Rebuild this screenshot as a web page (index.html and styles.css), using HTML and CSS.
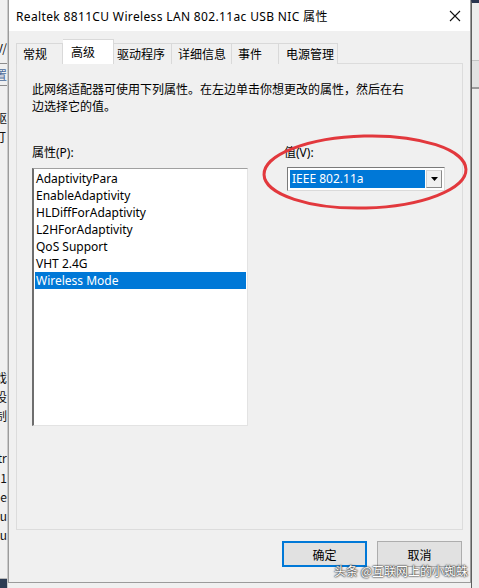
FILE: index.html
```html
<!DOCTYPE html>
<html lang="zh-CN">
<head>
  <meta charset="UTF-8" />
  <title>Realtek 8811CU Wireless LAN 802.11ac USB NIC 属性</title>
  <link rel="stylesheet" href="styles.css">
</head>
<body>
  <div class="screen">
    <div class="side side-left">
      <div class="frag frag-v">V/</div>
      <div class="frag frag-tab">置</div>
      <div class="frag frag-a">驱</div>
      <div class="frag frag-b">打</div>
      <div class="frag frag-c">戏</div>
      <div class="frag">设</div>
      <div class="frag">制</div>
      <div class="frag frag-d">tr</div>
      <div class="frag">1</div>
      <div class="frag">e</div>
      <div class="frag">tu</div>
      <div class="frag">tu</div>
      <div class="side-bottom"></div>
    </div>

    <div class="dialog">
      <div class="titlebar">
        <span class="title">Realtek 8811CU Wireless LAN 802.11ac USB NIC 属性</span>
        <svg class="close" width="12" height="12" viewBox="0 0 12 12">
          <path d="M1 1L11 11M11 1L1 11" stroke="#111" stroke-width="1.1" fill="none"/>
        </svg>
      </div>

      <div class="dialog-body">
        <div class="tabs">
          <div class="tab tab-general">常规</div>
          <div class="tab active">高级</div>
          <div class="tab tab-driver">驱动程序</div>
          <div class="tab tab-details">详细信息</div>
          <div class="tab tab-events">事件</div>
          <div class="tab tab-power">电源管理</div>
        </div>

        <div class="panel">
          <p class="desc">此网络适配器可使用下列属性。在左边单击你想更改的属性，然后在右<br>边选择它的值。</p>
          <div class="props">
            <div class="col-left">
              <div class="field-label">属性(P):</div>
              <ul class="listbox">
                <li>AdaptivityPara</li>
                <li>EnableAdaptivity</li>
                <li>HLDiffForAdaptivity</li>
                <li>L2HForAdaptivity</li>
                <li>QoS Support</li>
                <li>VHT 2.4G</li>
                <li class="selected">Wireless Mode</li>
              </ul>
            </div>
            <div class="col-right">
              <div class="field-label">值(V):</div>
              <div class="combo">
                <span class="combo-value">IEEE 802.11a</span>
                <span class="combo-btn">
                  <svg width="7" height="4" viewBox="0 0 7 4"><path d="M0 0H7L3.5 4z" fill="#000"/></svg>
                </span>
              </div>
            </div>
          </div>
        </div>

        <div class="buttons">
          <button class="btn btn-default" type="button">确定</button>
          <button class="btn" type="button">取消</button>
        </div>
      </div>

      <svg class="annotation" width="463" height="583" viewBox="0 0 463 583">
        <ellipse cx="357" cy="172" rx="101" ry="36" transform="rotate(-1.5 357 172)" fill="none" stroke="#e2383d" stroke-width="3"/>
      </svg>
      <div class="watermark">头条 @互联网上的小蜘蛛</div>
    </div>

    <div class="side side-right">
      <div class="right-band"></div>
    </div>
  </div>
</body>
</html>
```

FILE: styles.css
```css
* {
  margin: 0;
  padding: 0;
  box-sizing: border-box;
}

body {
  width: 479px;
  height: 588px;
  overflow: hidden;
  background-color: #f0f0f0;
  font-family: "Noto Sans", "Noto Sans CJK SC", sans-serif;
  font-size: 12px;
  color: #000;
}

.screen {
  display: flex;
  height: 588px;
}

/* window behind the dialog */
.side {
  flex: none;
  width: 8px;
  overflow: hidden;
  display: flex;
  flex-direction: column;
}

.side-left {
  background-color: #f0f0f0;
  border-right: 1px solid #c9c9c9;
}

.frag {
  display: flex;
  justify-content: flex-end;
  white-space: nowrap;
  height: 19px;
  line-height: 19px;
  font-family: "Noto Sans CJK SC", sans-serif;
  color: #111;
}

.frag-v {
  margin-top: 38px;
}

.frag-tab {
  margin-top: 6px;
  height: 23px;
  line-height: 22px;
  border-top: 1px solid #8c8c8c;
  border-bottom: 1px solid #8c8c8c;
  color: #4a6b9a;
}

.frag-a {
  margin-top: 22px;
}

.frag-b {
  padding-right: 1px;
}

.frag-c {
  margin-top: 222px;
}

.frag-d {
  margin-top: 24px;
  font-family: "Noto Sans", sans-serif;
}

.side-bottom {
  margin-top: auto;
  height: 10px;
  border-top: 1px solid #b9b9b9;
  background-color: #2c3b52;
}

.side-right {
  background-color: #ededed;
  border-left: 1px solid #5f5f5f;
  border-top: 3px solid #2a3550;
}

.right-band {
  margin-top: 57px;
  height: 29px;
  background-color: #e2e2e2;
  border-top: 1px solid #c4c4c4;
  border-bottom: 2px solid #9a9a9a;
}

/* dialog */
.dialog {
  position: relative;
  flex: none;
  width: 463px;
  height: 583px;
  background-color: #f0f0f0;
  border: 1px solid #9b9b9b;
  border-top: none;
}

.titlebar {
  display: flex;
  align-items: center;
  justify-content: space-between;
  height: 31px;
  padding: 0 9px 0 7px;
  background-color: #fff;
}

.title {
  font-size: 12px;
  letter-spacing: 0.35px;
  padding-top: 1px;
}

.dialog-body {
  padding: 8px 7px 0 7px;
}

.tabs {
  display: flex;
  align-items: flex-end;
  height: 25px;
  position: relative;
  z-index: 1;
  margin-bottom: -1px;
}

.tab {
  flex: none;
  height: 21px;
  line-height: 20px;
  padding-right: 0;
  white-space: nowrap;
  border: 1px solid #d9d9d9;
  border-bottom: none;
  border-left: none;
  background-color: #f0f0f0;
  font-family: "Noto Sans CJK SC", sans-serif;
}

.tab-general {
  width: 47px;
  padding-left: 6px;
  border-left: 1px solid #d9d9d9;
}

.tab.active {
  width: 51px;
  height: 25px;
  line-height: 23px;
  background-color: #fff;
  padding-left: 8px;
}

.tab-driver {
  width: 58px;
  padding-left: 3px;
}

.tab-details {
  width: 60px;
  padding-left: 6px;
}

.tab-events {
  width: 47px;
  padding-left: 6px;
}

.tab-power {
  width: 59px;
  padding-left: 7px;
}

.panel {
  height: 467px;
  padding: 16px 15px 0 15px;
  border: 1px solid #fbfbfb;
  outline: 1px solid #dcdcdc;
  outline-offset: -1px;
  border-top-color: #d9d9d9;
  background-color: #f0f0f0;
}

.desc {
  line-height: 17px;
  font-family: "Noto Sans CJK SC", sans-serif;
}

.props {
  display: flex;
  margin-top: 30px;
}

.field-label {
  height: 17px;
  line-height: 17px;
  font-family: "Noto Sans", "Noto Sans CJK SC", sans-serif;
}

.col-left .field-label {
  margin-bottom: 7px;
}

.listbox {
  list-style: none;
  width: 216px;
  height: 258px;
  padding: 1px 1px 0 1px;
  background-color: #fff;
  border: 1px solid #e3e3e3;
  border-top-color: #a0a0a0;
  border-left: 2px solid #6e6e6e;
}

.listbox li {
  height: 17px;
  line-height: 17px;
  padding-left: 1px;
  white-space: nowrap;
}

.listbox li.selected {
  background-color: #0078d7;
  color: #fff;
}

.col-right {
  margin-left: 36px;
}

.col-right .field-label {
  margin-bottom: 6px;
}

.combo {
  display: flex;
  width: 158px;
  height: 24px;
  margin-left: 3px;
  padding: 2px;
  background-color: #fff;
  border: 1px solid #7a7a7a;
  border-right-color: #dadada;
  border-bottom-color: #dadada;
}

.combo-value {
  flex: 1;
  line-height: 18px;
  padding-left: 2px;
  background-color: #0078d7;
  color: #fff;
}

.combo-btn {
  display: flex;
  align-items: center;
  justify-content: center;
  width: 16px;
  margin-left: 1px;
  background-color: #f0f0f0;
  border: 1px solid #d2d2d2;
  border-right-color: #8a8a8a;
  border-bottom-color: #8a8a8a;
}

.buttons {
  display: flex;
  justify-content: flex-end;
  gap: 10px;
  margin-top: 11px;
  padding-right: 1px;
}

.btn {
  width: 85px;
  height: 26px;
  font-family: "Noto Sans CJK SC", sans-serif;
  font-size: 12px;
  color: #000;
  background-color: #e1e1e1;
  border: 1px solid #adadad;
}

.btn-default {
  border: 2px solid #0078d7;
}

/* annotation over the screenshot */
.annotation {
  position: absolute;
  left: -1px;
  top: 0;
  pointer-events: none;
}

.watermark {
  position: absolute;
  right: 2px;
  bottom: 3px;
  font-family: "Noto Sans CJK SC", sans-serif;
  font-size: 12px;
  color: #fff;
  text-shadow: 0 0 1px #333, 0 0 2px #333, 0 0 2px #555;
}
```
